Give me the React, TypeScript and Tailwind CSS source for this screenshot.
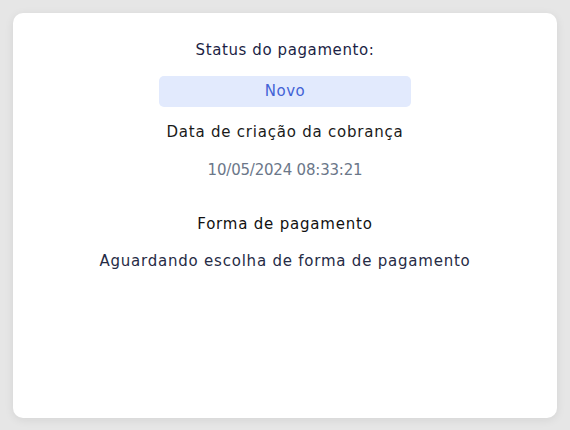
import React from "react";

export default function App() {
  return (
    <div
      className="h-[430px] w-[570px] bg-[#e6e6e6] px-[13px] pt-[13px] pb-[12px]"
      style={{ fontFamily: '"DejaVu Sans", "Open Sans", sans-serif' }}
    >
      <div className="flex h-[405px] flex-col items-center rounded-[10px] bg-white pt-[26px] shadow-[0_2px_10px_rgba(0,0,0,0.08)]">
        <div className="text-[15px] leading-[22px] tracking-[0.6px] text-[#1c1f45]">Status do pagamento:</div>
        <div className="mt-[15px] flex h-[31px] w-[252px] items-center justify-center rounded-[5px] bg-[#e2eafd] text-[15px] tracking-[0.5px] text-[#4263d6]">
          Novo
        </div>
        <div className="mt-[14px] text-[15px] leading-[22px] tracking-[0.78px] text-[#1a1a1a]">Data de criação da cobrança</div>
        <div className="mt-[16px] text-[15px] leading-[22px] tracking-[-0.2px] text-[#6b7789]">10/05/2024 08:33:21</div>
        <div className="mt-[32px] text-[15px] leading-[22px] tracking-[0.8px] text-[#111]">Forma de pagamento</div>
        <div className="mt-[15px] text-[15px] leading-[22px] tracking-[0.78px] text-[#262b45]">
          Aguardando escolha de forma de pagamento
        </div>
      </div>
    </div>
  );
}
